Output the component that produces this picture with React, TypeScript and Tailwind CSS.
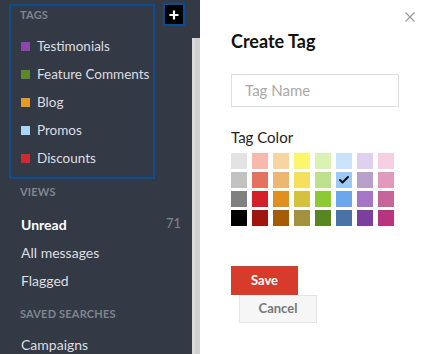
import { Check } from 'lucide-react';

const tags = [
  { name: 'Testimonials', color: 'bg-[#8f45b0]' },
  { name: 'Feature Comments', color: 'bg-[#5b8a26]' },
  { name: 'Blog', color: 'bg-[#e79a22]' },
  { name: 'Promos', color: 'bg-[#a8d6f8]' },
  { name: 'Discounts', color: 'bg-[#d4282c]' },
];

const swatches = [
  ['bg-[#e3e3e3]', 'bg-[#f8b9ac]', 'bg-[#f8d4a1]', 'bg-[#fdf66c]', 'bg-[#daf3b2]', 'bg-[#c8e3fb]', 'bg-[#e0d0f0]', 'bg-[#f7cfe3]'],
  ['bg-[#c2c2c2]', 'bg-[#e3735f]', 'bg-[#eeb771]', 'bg-[#f5e05d]', 'bg-[#bce08b]', 'bg-[#9ccaf5]', 'bg-[#b99fcb]', 'bg-[#e199be]'],
  ['bg-[#808080]', 'bg-[#d21f2a]', 'bg-[#e0901f]', 'bg-[#d4c23f]', 'bg-[#8cc933]', 'bg-[#6aa7ec]', 'bg-[#a676c6]', 'bg-[#c5659a]'],
  ['bg-[#000000]', 'bg-[#a0150e]', 'bg-[#a65c06]', 'bg-[#a49140]', 'bg-[#588721]', 'bg-[#4a72a6]', 'bg-[#7d3f9e]', 'bg-[#b8347f]'],
];

const SectionLabel = ({ children }: { children: string }) => (
  <div className="text-[11px] leading-[14px] font-bold uppercase tracking-[0.2px] text-[#7f858f]">{children}</div>
);

export default function App() {
  return (
    <div className="flex w-[429px] h-[354px] overflow-hidden font-['Lato',sans-serif]">
      {/* sidebar */}
      <div className="w-[192px] shrink-0 bg-[#343a45] flex flex-col">
        <div className="flex items-start">
          <div className="ml-[9px] mt-[4px] w-[146px] h-[175px] border-2 border-[#0b4d8f] pl-[9px] pt-[2px]">
            <SectionLabel>Tags</SectionLabel>
            <div className="mt-[10px] flex flex-col">
              {tags.map((t) => (
                <div key={t.name} className="h-[28px] flex items-center pl-[1px] whitespace-nowrap">
                  <span className={`w-[9px] h-[9px] shrink-0 ${t.color}`} />
                  <span className="ml-[7px] text-[13.5px] text-[#dcdee2]">{t.name}</span>
                </div>
              ))}
            </div>
          </div>
          <div className="ml-[8px] mt-[3px] w-[22px] h-[23px] border-2 border-[#0b4d8f] bg-black flex items-center justify-center">
            <svg width="10" height="10" viewBox="0 0 10 10">
              <path d="M5 0.5v9M0.5 5h9" stroke="#fff" strokeWidth="2.2" />
            </svg>
          </div>
        </div>
        <div className="pl-[21px] pr-[11px]">
          <div className="mt-[6px] -ml-[1px]">
            <SectionLabel>Views</SectionLabel>
          </div>
          <div className="mt-[11px] flex flex-col">
            <div className="h-[28px] flex items-center justify-between">
              <span className="text-[14px] font-bold text-white">Unread</span>
              <span className="text-[13px] text-[#7f858f]">71</span>
            </div>
            <div className="h-[28px] flex items-center text-[14px] text-[#dcdee2]">All messages</div>
            <div className="h-[28px] flex items-center text-[14px] text-[#dcdee2]">Flagged</div>
          </div>
          <div className="mt-[13px] -ml-[1px]">
            <SectionLabel>Saved Searches</SectionLabel>
          </div>
          <div className="mt-[11px] h-[24px] flex items-center text-[14px] text-[#dcdee2]">Campaigns</div>
        </div>
      </div>

      {/* page edge behind the panel */}
      <div className="w-[8px] shrink-0 flex flex-col">
        <div className="h-[38px] bg-[#343a45]" />
        <div className="flex-1 bg-[#d0d0d0] border-l-[3px] border-[#dadada]" />
      </div>

      {/* create tag panel */}
      <div className="flex-1 bg-white flex flex-col pl-[31px]">
        <div className="flex justify-end pr-[14px] pt-[12px]">
          <svg width="10" height="10" viewBox="0 0 10 10">
            <path d="M0.5 0.5l9 9M9.5 0.5l-9 9" stroke="#9a9a9a" strokeWidth="1.2" />
          </svg>
        </div>
        <h2 className="mt-[7px] text-[18px] leading-[24px] font-bold text-[#111]">Create Tag</h2>
        <div className="mt-[21px] w-[168px] h-[33px] border border-[#dedede] flex items-center pl-[13px] text-[15px] text-[#a9a9a9]">
          Tag Name
        </div>
        <div className="mt-[20px] text-[15px] leading-[20px] text-[#222]">Tag Color</div>
        <div className="mt-[6px] flex flex-col gap-[3px]">
          {swatches.map((row, i) => (
            <div key={i} className="flex gap-[5px]">
              {row.map((c, j) => (
                <div key={j} className={`w-[16px] h-[16px] ${c} flex items-center justify-center`}>
                  {i === 1 && j === 5 && <Check size={12} strokeWidth={4} className="text-[#111]" />}
                </div>
              ))}
            </div>
          ))}
        </div>
        <button className="mt-[40px] w-[67px] h-[29px] bg-[#d63b2b] text-white text-[13px] font-bold">Save</button>
        <button className="ml-[8px] w-[78px] h-[28px] bg-[#f6f6f6] border border-[#e4e4e4] text-[#777] text-[13px] font-bold">
          Cancel
        </button>
      </div>
    </div>
  );
}
